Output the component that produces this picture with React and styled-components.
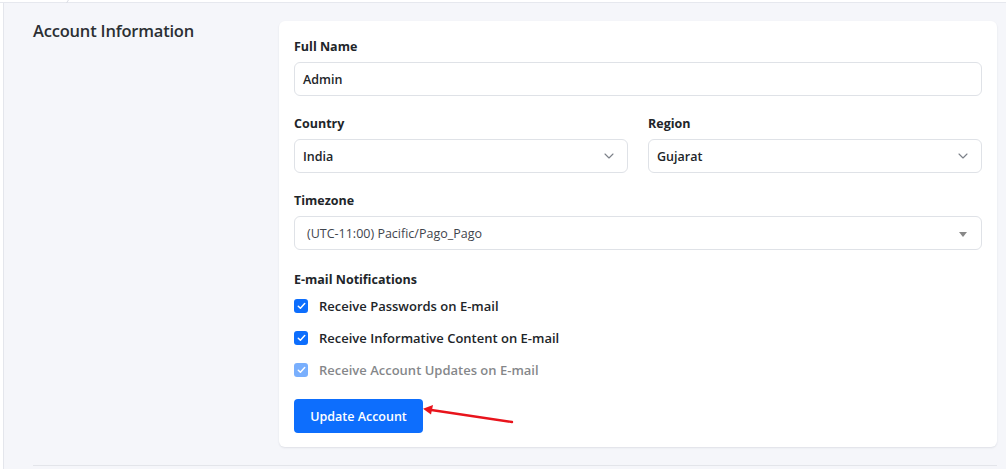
import React from "react";
import styled, { createGlobalStyle } from "styled-components";

const Global = createGlobalStyle`
  html, body { margin: 0; padding: 0; background: #ffffff; }
  body { font-family: "Open Sans", "Noto Sans", sans-serif; color: #212529; }
  * { box-sizing: border-box; }
`;

const TopStrip = styled.div`
  height: 3px;
  background: #ffffff;
  border-bottom: 1px solid #e6e8ee;
  position: relative;
`;

const TabCorner = styled.div`
  position: absolute;
  left: 66px;
  top: 0;
  width: 2px;
  height: 3px;
  border-right: 1px solid #d9dce3;
  transform: skewX(-30deg);
`;

const Page = styled.div`
  margin-left: 3px;
  border-left: 1px solid #e4e6ec;
  background: #f5f6fa;
  height: 466px;
  padding: 0 9px 0 29px;
`;

const Section = styled.section`
  display: grid;
  grid-template-columns: 246px 1fr;
  padding: 18px 0 18px;
  border-bottom: 1px solid #e3e5ea;
`;

const SectionTitle = styled.h2`
  margin: -1px 0 0;
  font-size: 16.5px;
  font-weight: 600;
  color: #2b2f33;
  letter-spacing: -0.2px;
  line-height: 22px;
`;

const Card = styled.div`
  background: #ffffff;
  border-radius: 6px;
  box-shadow: 0 1px 2px rgba(30, 40, 60, 0.1);
  padding: 17px 15px 14px;
  display: flex;
  flex-direction: column;
`;

const Field = styled.div`
  display: flex;
  flex-direction: column;
  margin-bottom: 19px;
`;

const Row = styled.div`
  display: grid;
  grid-template-columns: 1fr 1fr;
  column-gap: 20px;
`;

const Label = styled.label`
  font-size: 12.5px;
  font-weight: 700;
  color: #212529;
  line-height: 18px;
  margin-bottom: 6px;
`;

const InputBox = styled.div`
  height: 34px;
  border: 1px solid #dfe2e7;
  border-radius: 6px;
  display: flex;
  align-items: center;
  justify-content: space-between;
  padding: 0 ${(p) => (p.$select2 ? "14px" : "13px")} 0 ${(p) => (p.$select2 ? "12px" : "8px")};
  font-size: 12.5px;
  font-weight: ${(p) => (p.$light ? 400 : 600)};
  color: ${(p) => (p.$light ? "#3f454d" : "#212529")};
  background: #ffffff;
`;

const Caret = styled.span`
  width: 0;
  height: 0;
  border-left: 4px solid transparent;
  border-right: 4px solid transparent;
  border-top: 5px solid #888888;
  margin-top: 2px;
`;

const Chevron = () => (
  <svg width="10" height="6" viewBox="0 0 10 6" fill="none">
    <path d="M1 1l4 4 4-4" stroke="#7c8189" strokeWidth="1.1" strokeLinecap="round" strokeLinejoin="round" />
  </svg>
);

const GroupTitle = styled.div`
  font-size: 12.5px;
  font-weight: 700;
  line-height: 18px;
  margin-top: 2px;
  margin-bottom: 8px;
`;

const CheckRow = styled.label`
  display: flex;
  align-items: center;
  gap: 11px;
  height: 18px;
  margin-bottom: 14px;
  font-size: 13px;
  font-weight: 600;
  color: #212529;
  opacity: ${(p) => (p.$disabled ? 0.55 : 1)};
`;

const Box = styled.span`
  width: 14px;
  height: 14px;
  border-radius: 3px;
  background: #0d6efd;
  display: inline-flex;
  align-items: center;
  justify-content: center;
  flex-shrink: 0;
`;

const Tick = () => (
  <svg width="9" height="8" viewBox="0 0 9 8" fill="none">
    <path d="M1.3 4.2l2.1 2L7.7 1.6" stroke="#fff" strokeWidth="1.5" strokeLinecap="round" strokeLinejoin="round" />
  </svg>
);

const ButtonRow = styled.div`
  position: relative;
  margin-top: 6px;
  height: 34px;
`;

const Button = styled.button`
  height: 34px;
  width: 129px;
  padding: 0;
  background: #0d6efd;
  border: none;
  border-radius: 4px;
  color: #ffffff;
  font-family: inherit;
  font-size: 12.5px;
  font-weight: 600;
  cursor: pointer;
`;

const Arrow = styled.svg`
  position: absolute;
  left: 128px;
  top: 9px;
  overflow: visible;
`;

export default function App() {
  return (
    <>
      <Global />
      <TopStrip>
        <TabCorner />
      </TopStrip>
      <Page>
        <Section>
          <SectionTitle>Account Information</SectionTitle>
          <Card>
            <Field>
              <Label>Full Name</Label>
              <InputBox>Admin</InputBox>
            </Field>
            <Row>
              <Field>
                <Label>Country</Label>
                <InputBox>
                  India
                  <Chevron />
                </InputBox>
              </Field>
              <Field>
                <Label>Region</Label>
                <InputBox>
                  Gujarat
                  <Chevron />
                </InputBox>
              </Field>
            </Row>
            <Field>
              <Label>Timezone</Label>
              <InputBox $light $select2>
                (UTC-11:00) Pacific/Pago_Pago
                <Caret />
              </InputBox>
            </Field>
            <GroupTitle>E-mail Notifications</GroupTitle>
            <CheckRow>
              <Box><Tick /></Box>
              Receive Passwords on E-mail
            </CheckRow>
            <CheckRow>
              <Box><Tick /></Box>
              Receive Informative Content on E-mail
            </CheckRow>
            <CheckRow $disabled>
              <Box><Tick /></Box>
              Receive Account Updates on E-mail
            </CheckRow>
            <ButtonRow>
              <Button>Update Account</Button>
              <Arrow width="92" height="20" viewBox="0 0 92 20">
                <path d="M90 14 L6 1.5" stroke="#e8141c" strokeWidth="2.4" strokeLinecap="round" />
                <path d="M1 0.8 L11 -3 L9 6.5 Z" fill="#e8141c" />
              </Arrow>
            </ButtonRow>
          </Card>
        </Section>
      </Page>
    </>
  );
}
